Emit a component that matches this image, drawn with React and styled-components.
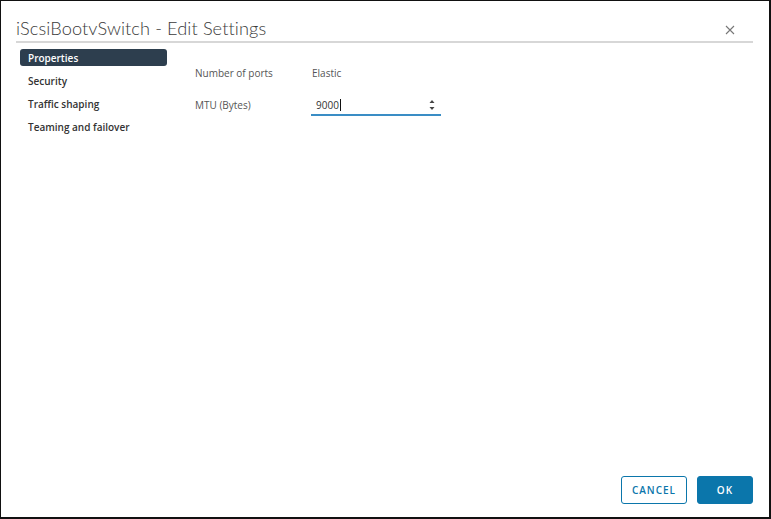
import React from "react";
import styled, { createGlobalStyle } from "styled-components";

const Global = createGlobalStyle`
  html, body { margin: 0; padding: 0; background: #fff; }
  body { font-family: "Open Sans", "Liberation Sans", sans-serif; color: #333; }
  * { box-sizing: border-box; }
`;

const Frame = styled.div`
  width: 771px;
  height: 519px;
  border-style: solid;
  border-color: #111;
  border-width: 1px 2px 2px 1px;
  display: flex;
  flex-direction: column;
  background: #fff;
`;

const Header = styled.div`
  margin: 0 16px 0 15px;
  height: 42px;
  border-bottom: 2px solid #d7d7d7;
  display: flex;
  align-items: flex-end;
  justify-content: space-between;
`;

const Title = styled.h1`
  margin: 0 0 2px 0;
  font-family: Lato, "Open Sans", sans-serif;
  font-weight: 300;
  font-size: 18.2px;
  color: #3a3a3a;
  letter-spacing: 0.1px;
`;

const Close = styled.button`
  border: none;
  background: none;
  padding: 0;
  margin: 0 18px 6px 0;
  width: 10px;
  height: 10px;
  display: flex;
`;

const Body = styled.div`
  flex: 1;
  display: flex;
  padding: 6px 0 0 19px;
`;

const Nav = styled.nav`
  width: 147px;
  display: flex;
  flex-direction: column;
  gap: 6.3px;
`;

const NavItem = styled.div`
  height: 17px;
  padding: 0 8px;
  border-radius: 3px;
  display: flex;
  align-items: center;
  font-size: 10px;
  font-weight: 600;
  color: ${(p) => (p.active ? "#fff" : "#333")};
  background: ${(p) => (p.active ? "#2d3e4e" : "transparent")};
`;

const Content = styled.div`
  margin-left: 28px;
  padding-top: 17px;
  display: grid;
  grid-template-columns: 117px 129px;
  grid-auto-rows: 32px;
  align-items: start;
`;

const Label = styled.div`
  font-size: 10px;
  color: #555;
  line-height: 14px;
`;

const Value = styled.div`
  font-size: 10px;
  color: #555;
  line-height: 14px;
`;

const InputWrap = styled.div`
  display: flex;
  align-items: center;
  height: 20px;
  margin: -2px 0 0 -1px;
  border-bottom: 2px solid #3a8dc5;
  padding: 0 5px 0 5px;
`;

const Input = styled.div`
  flex: 1;
  font-size: 10px;
  color: #333;
  line-height: 14px;
  display: flex;
  align-items: center;
`;

const Caret = styled.span`
  width: 1px;
  height: 12px;
  background: #111;
  margin-left: 1px;
`;

const Spinner = styled.svg`
  width: 8px;
  height: 16px;
`;

const Footer = styled.div`
  display: flex;
  justify-content: flex-end;
  gap: 10px;
  padding: 0 16px 13px 0;
`;

const Button = styled.button`
  height: 28px;
  width: ${(p) => p.w}px;
  border-radius: 3px;
  border: 1px solid #0b76ab;
  background: ${(p) => (p.primary ? "#0b76ab" : "#fff")};
  color: ${(p) => (p.primary ? "#fff" : "#0b76ab")};
  font-family: "Open Sans", sans-serif;
  font-size: 10px;
  font-weight: 600;
  letter-spacing: 1px;
  padding: 0;
  cursor: pointer;
`;

const navItems = ["Properties", "Security", "Traffic shaping", "Teaming and failover"];

export default function App() {
  return (
    <>
      <Global />
      <Frame>
        <Header>
          <Title>iScsiBootvSwitch - Edit Settings</Title>
          <Close aria-label="close">
            <svg width="10" height="10" viewBox="0 0 10 10">
              <path d="M1 1L9 9M9 1L1 9" stroke="#777" strokeWidth="1.1" />
            </svg>
          </Close>
        </Header>
        <Body>
          <Nav>
            {navItems.map((n, i) => (
              <NavItem key={n} active={i === 0}>
                {n}
              </NavItem>
            ))}
          </Nav>
          <Content>
            <Label>Number of ports</Label>
            <Value>Elastic</Value>
            <Label>MTU (Bytes)</Label>
            <InputWrap>
              <Input>
                9000
                <Caret />
              </Input>
              <Spinner viewBox="0 0 8 16">
                <path d="M1.5 6L4 3L6.5 6Z" fill="#444" />
                <path d="M1.5 10L4 13L6.5 10Z" fill="#444" />
              </Spinner>
            </InputWrap>
          </Content>
        </Body>
        <Footer>
          <Button w={66}>CANCEL</Button>
          <Button w={56} primary>
            OK
          </Button>
        </Footer>
      </Frame>
    </>
  );
}
